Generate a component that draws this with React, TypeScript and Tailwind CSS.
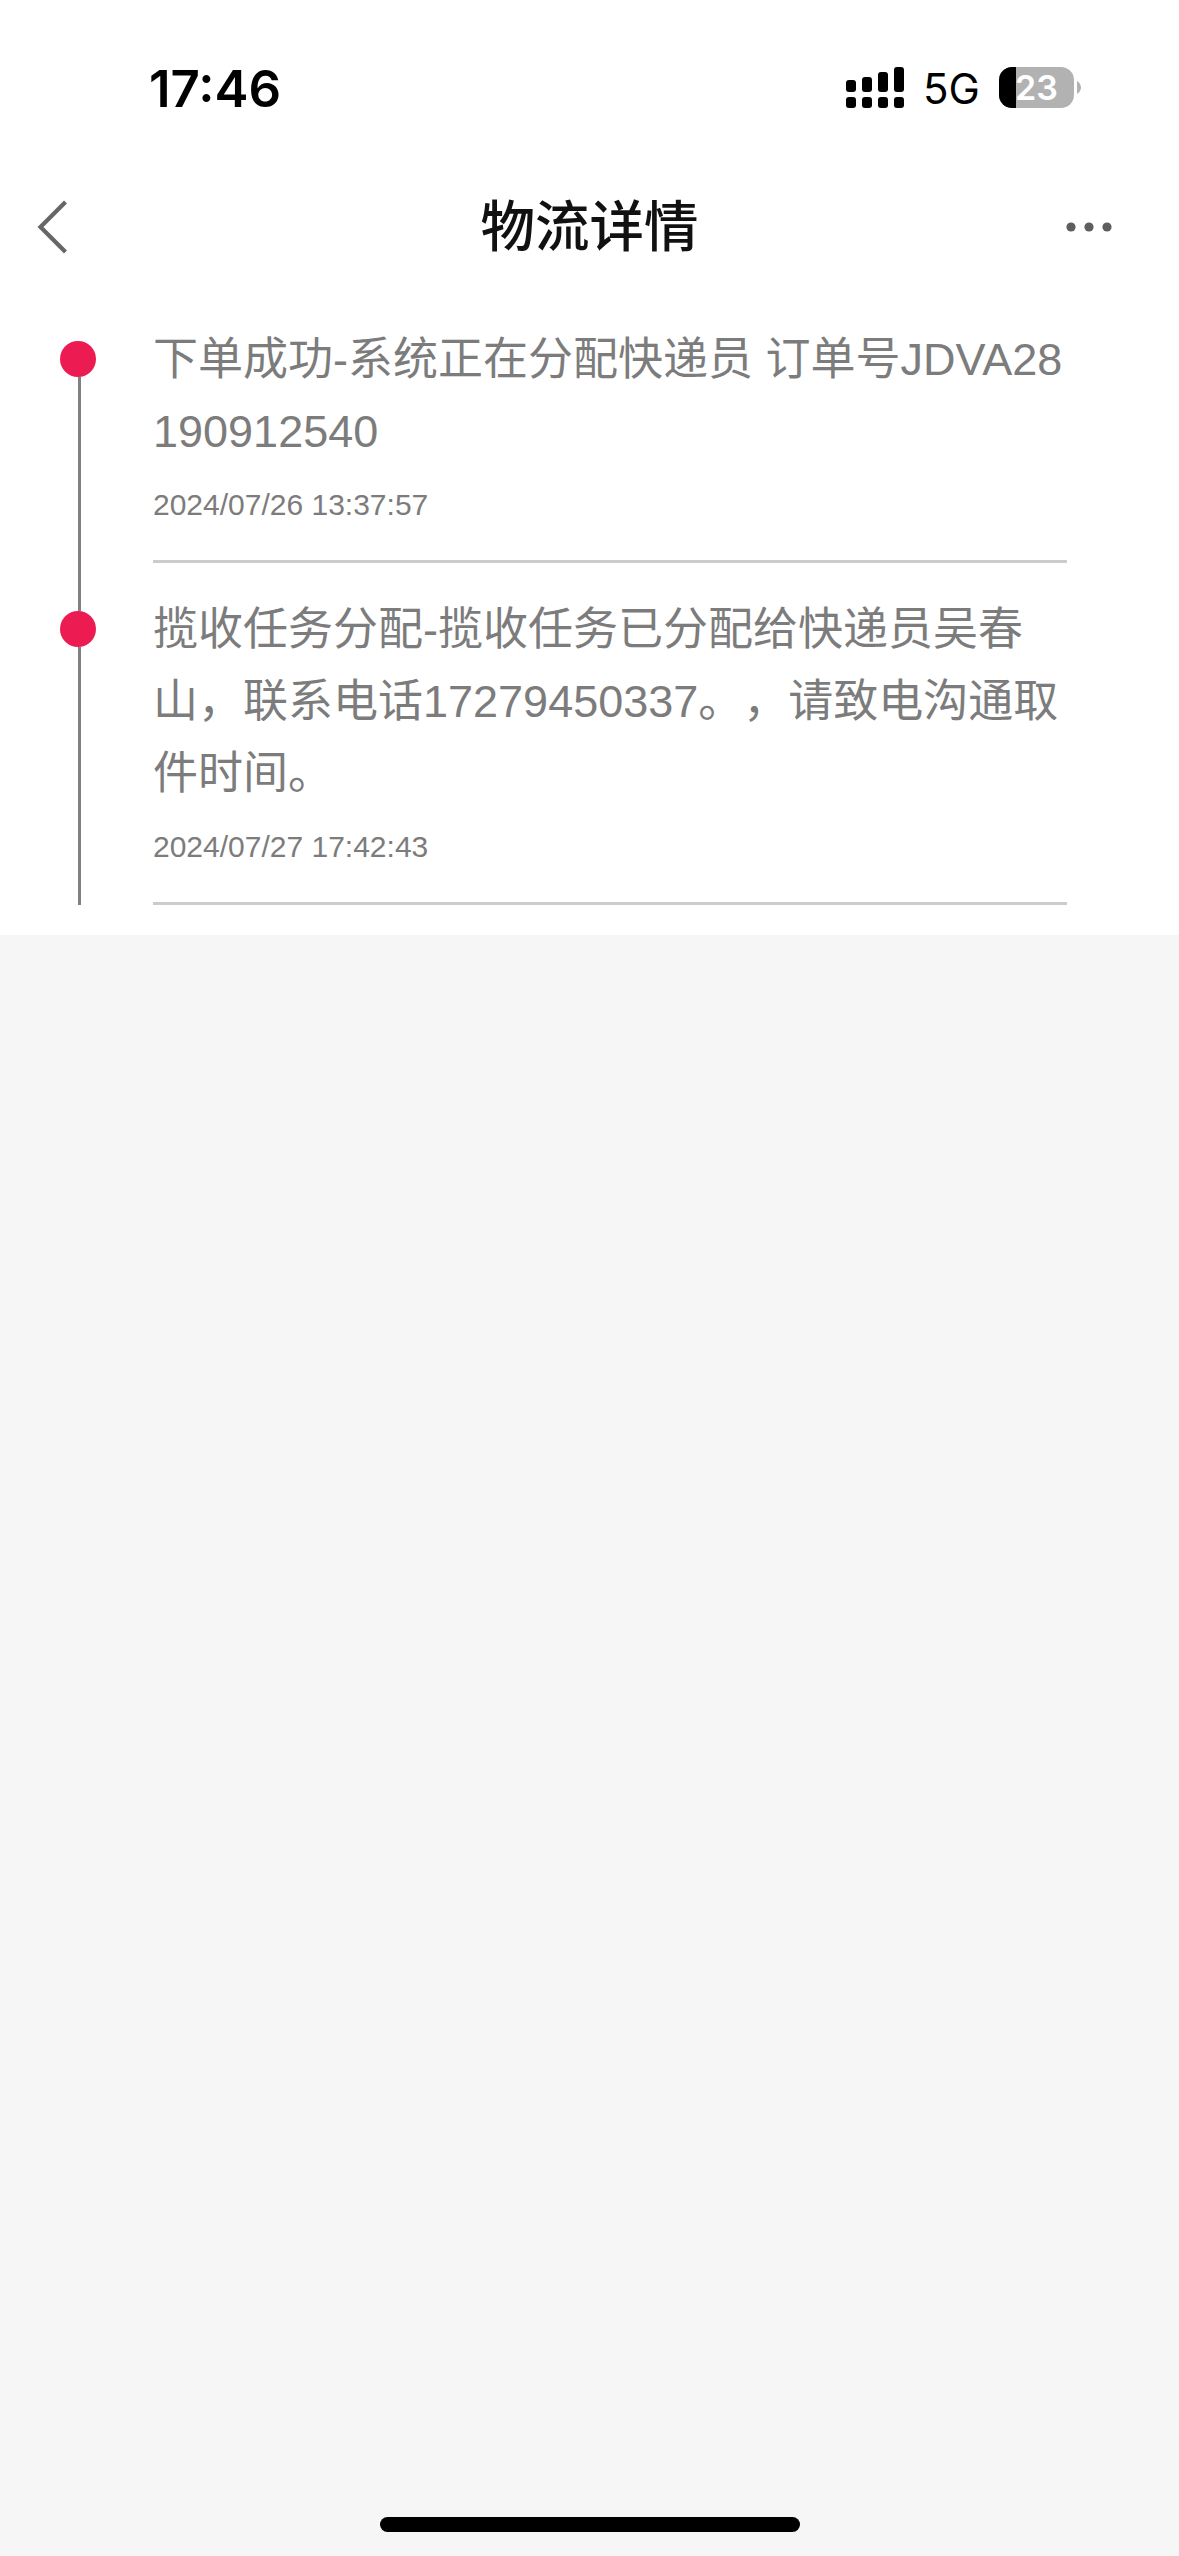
import React from 'react';

interface TrackEvent {
  text: string;
  time: string;
}

const events: TrackEvent[] = [
  {
    text: '下单成功-系统正在分配快递员 订单号JDVA28190912540',
    time: '2024/07/26 13:37:57',
  },
  {
    text: '揽收任务分配-揽收任务已分配给快递员吴春山，联系电话17279450337。，请致电沟通取件时间。',
    time: '2024/07/27 17:42:43',
  },
];

const SignalIcon = () => (
  <svg width="58" height="41" viewBox="0 0 58 41" fill="#000">
    <rect x="0" y="13" width="10" height="12" rx="3" />
    <rect x="16" y="10" width="10" height="15" rx="3" />
    <rect x="32" y="5" width="10" height="20" rx="3" />
    <rect x="48" y="0" width="10" height="25" rx="3" />
    <rect x="0" y="30" width="10" height="11" rx="3" />
    <rect x="16" y="30" width="10" height="11" rx="3" />
    <rect x="32" y="30" width="10" height="11" rx="3" />
    <rect x="48" y="30" width="10" height="11" rx="3" />
  </svg>
);

const Battery = ({ level }: { level: number }) => (
  <div className="flex items-center gap-[3px]">
    <div className="relative flex h-[41px] w-[75px] items-center justify-center overflow-hidden rounded-[13px] bg-[#b2b2b2]">
      <div className="absolute inset-y-0 left-0 bg-black" style={{ width: `${level}%` }} />
      <span className="relative text-[34px] leading-none font-semibold text-white">{level}</span>
    </div>
    <svg width="4" height="13" viewBox="0 0 4 13" fill="#b2b2b2">
      <path d="M0 0C2.5 1.5 4 4 4 6.5S2.5 11.500 0 13Z" />
    </svg>
  </div>
);

const StatusBar = () => (
  <div className="flex h-[150px] items-start justify-between pt-[67px] pr-[98px] pl-[149px] font-['Inter',sans-serif] text-black">
    <span className="flex h-[42px] items-center text-[51px] leading-none font-semibold">17:46</span>
    <div className="flex h-[41px] items-center">
      <SignalIcon />
      <span className="ml-[19px] w-[76px] pt-[2px] text-[42px] leading-none">5G</span>
      <Battery level={23} />
    </div>
  </div>
);

const NavBar = () => (
  <div className="grid h-[154px] grid-cols-[1fr_auto_1fr] items-center pr-[67px] pl-[36px]">
    <svg width="32" height="56" viewBox="0 0 32 56" fill="none" stroke="#666" strokeWidth="4.2">
      <path d="M29.500 3L4.500 28l25 25" />
    </svg>
    <h1 className="ml-[31px] pt-[2px] text-[54.5px] leading-none font-medium text-[#111]">物流详情</h1>
    <svg className="justify-self-end" width="46" height="10" viewBox="0 0 46 10" fill="#5e5e5a">
      <circle cx="5" cy="5" r="4.6" />
      <circle cx="23" cy="5" r="4.6" />
      <circle cx="41" cy="5" r="4.6" />
    </svg>
  </div>
);

const TrackItem = ({ event, first, last }: { event: TrackEvent; first: boolean; last: boolean }) => (
  <li className="flex">
    {/* Rail */}
    <div className="mr-[57px] flex w-9 shrink-0 flex-col items-center">
      <div className={`ml-[3px] h-[19px] w-[3px] ${first ? '' : 'bg-[#808080]'}`} />
      <div className="size-9 rounded-full bg-[#ec1b52]" />
      <div className="ml-[3px] w-[3px] flex-1 bg-[#808080]" />
    </div>

    <div className={last ? '' : 'pb-[29px]'}>
      <div className="w-[914px] border-b-[3px] border-[#ccc] text-[#7c7c7c]">
        <p className="pt-[2px] text-[45px] leading-[72px] break-all [text-spacing-trim:space-all]">
          {event.text}
        </p>
        <p className="flex h-[92px] items-start pt-[17px] text-[30px] leading-[40px]">{event.time}</p>
      </div>
    </div>
  </li>
);

export default function App() {
  return (
    <div
      lang="zh-CN"
      className="flex h-[2556px] w-[1179px] flex-col bg-[#f6f6f6] font-['Liberation_Sans','Noto_Sans_CJK_SC',sans-serif]"
    >
      <div className="bg-white">
        <StatusBar />
        <NavBar />
        <ul className="pt-[18px] pb-[30px] pl-[60px]">
          {events.map((event, i) => (
            <TrackItem
              key={event.time}
              event={event}
              first={i === 0}
              last={i === events.length - 1}
            />
          ))}
        </ul>
      </div>

      {/* Home indicator */}
      <div className="mx-auto mt-auto mb-6 h-[15px] w-[420px] rounded-full bg-black" />
    </div>
  );
}
